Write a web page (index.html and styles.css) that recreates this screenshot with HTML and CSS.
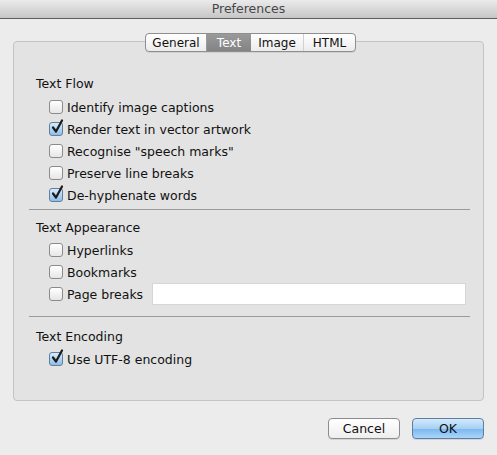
FILE: index.html
```html
<!DOCTYPE html>
<html>
<head>
<meta charset="utf-8">
<link rel="stylesheet" href="styles.css">
</head>
<body>
<div class="window">
  <div class="titlebar">Preferences</div>
  <div class="content">
    <div class="tabs">
      <div class="tab tab-general">General</div>
      <div class="tab tab-text selected">Text</div>
      <div class="tab tab-image">Image</div>
      <div class="tab tab-html">HTML</div>
    </div>
    <div class="panel">
      <div class="section first">
        <div class="heading">Text Flow</div>
        <label class="row"><span class="cb"></span>Identify image captions</label>
        <label class="row"><span class="cb checked"><svg viewBox="0 0 14 16" width="14" height="16"><path d="M3 8.5 L6 12.5 L12 1.5" fill="none" stroke="#1b1b1b" stroke-width="2.2" stroke-linecap="round" stroke-linejoin="round"/></svg></span>Render text in vector artwork</label>
        <label class="row"><span class="cb"></span>Recognise "speech marks"</label>
        <label class="row"><span class="cb"></span>Preserve line breaks</label>
        <label class="row"><span class="cb checked"><svg viewBox="0 0 14 16" width="14" height="16"><path d="M3 8.5 L6 12.5 L12 1.5" fill="none" stroke="#1b1b1b" stroke-width="2.2" stroke-linecap="round" stroke-linejoin="round"/></svg></span>De-hyphenate words</label>
      </div>
      <div class="sep sep-a"></div>
      <div class="section">
        <div class="heading">Text Appearance</div>
        <label class="row"><span class="cb"></span>Hyperlinks</label>
        <label class="row"><span class="cb"></span>Bookmarks</label>
        <div class="row"><span class="cb"></span>Page breaks<span class="field"></span></div>
      </div>
      <div class="sep sep-b"></div>
      <div class="section">
        <div class="heading">Text Encoding</div>
        <label class="row"><span class="cb checked"><svg viewBox="0 0 14 16" width="14" height="16"><path d="M3 8.5 L6 12.5 L12 1.5" fill="none" stroke="#1b1b1b" stroke-width="2.2" stroke-linecap="round" stroke-linejoin="round"/></svg></span>Use UTF-8 encoding</label>
      </div>
    </div>
    <div class="buttons">
      <div class="btn">Cancel</div>
      <div class="btn primary">OK</div>
    </div>
  </div>
</div>
</body>
</html>
```

FILE: styles.css
```css
* { box-sizing: border-box; }
html, body { margin: 0; padding: 0; }
body {
  width: 497px;
  height: 455px;
  background: #ececec;
  font-family: "DejaVu Sans", "Noto Sans", sans-serif;
  font-size: 12.5px;
  color: #111;
  overflow: hidden;
}
.titlebar {
  height: 19px;
  background: linear-gradient(#ebebeb, #c6c6c6);
  border-bottom: 1px solid #5e5e5e;
  text-align: center;
  font-size: 12.5px;
  line-height: 18px;
  color: #474747;
}
.content {
  padding: 14px 13px 0 13px;
}
.tabs {
  position: relative;
  z-index: 1;
  display: flex;
  width: 211px;
  height: 19px;
  margin: 0 auto 0 132px;
  border: 1px solid #8e8e8e;
  border-radius: 4px;
  background: linear-gradient(#ffffff, #ececec);
  overflow: hidden;
  box-shadow: 0 1px 0 rgba(0,0,0,0.08);
}
.tab {
  display: flex;
  align-items: center;
  justify-content: center;
  height: 100%;
  font-size: 12px;
  color: #111;
}
.tab-general { width: 61px; border-right: 1px solid #9a9a9a; }
.tab-text { width: 44px; }
.tab-image { width: 53px; border-right: 1px solid #d0d0d0; }
.tab-html { flex: 1; }
.tab.selected {
  background: linear-gradient(#9a9a9a, #838383);
  color: #fff;
}
.panel {
  margin-top: -11px;
  height: 360px;
  border: 1px solid #c4c4c4;
  border-radius: 4px;
  background: #e3e3e3;
  padding: 31px 13px 0 15px;
}
.section {
  padding-left: 7px;
}
.section.first .row { position: relative; top: 1px; }
.heading {
  height: 22px;
  line-height: 22px;
}
.row {
  display: flex;
  align-items: center;
  height: 22px;
  padding-left: 13px;
}
.cb {
  position: relative;
  flex: none;
  width: 14px;
  height: 14px;
  margin-right: 4px;
  border: 1px solid #8b8b8b;
  border-radius: 3px;
  background: linear-gradient(#ffffff, #e6e6e6);
}
.cb.checked {
  background: linear-gradient(#d9ebfb, #8fbde8);
  border-color: #5f7fa0;
}
.cb svg {
  position: absolute;
  left: 0;
  top: -4px;
}
.field {
  flex: 1;
  height: 22px;
  margin-left: 9px;
  margin-right: 4px;
  background: #fff;
  border: 1px solid #d6d6d6;
}
.sep {
  height: 1px;
  background: #9a9a9a;
}
.sep-a { margin: 4px 0 7px 0; }
.sep-b { margin: 11px 0 9px 0; }
.buttons {
  display: flex;
  justify-content: flex-end;
  gap: 12px;
  margin-top: 17px;
}
.btn {
  width: 72px;
  height: 21px;
  border: 1px solid #8c8c8c;
  border-radius: 4px;
  background: linear-gradient(#ffffff, #eeeeee);
  display: flex;
  align-items: center;
  justify-content: center;
  font-size: 12.5px;
  color: #111;
  box-shadow: 0 1px 0 rgba(0,0,0,0.1);
}
.btn.primary {
  border-color: #5d7ea4;
  background: linear-gradient(#d4e9fb, #a5d0f4 50%, #79b6ee 51%, #a9d6fa);
}
```
